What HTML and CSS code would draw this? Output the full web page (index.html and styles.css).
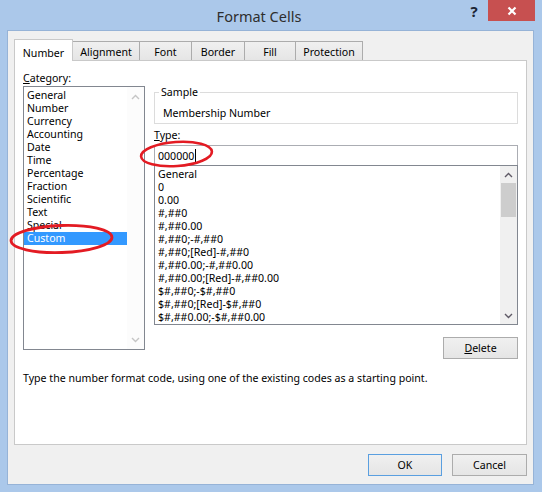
FILE: index.html
```html
<!DOCTYPE html>
<html>
<head>
<meta charset="utf-8">
<link rel="stylesheet" href="styles.css">
</head>
<body>
<div class="window">
  <div class="titlebar">
    <div class="title">Format Cells</div>
    <div class="help">?</div>
    <div class="close"><svg width="10" height="10" viewBox="0 0 10 10"><path d="M1.5 1.5 L8.5 8.5 M8.5 1.5 L1.5 8.5" stroke="#fff" stroke-width="2.2" fill="none"/></svg></div>
  </div>
  <div class="client">
    <div class="tabs">
      <div class="tab active t-number">Number</div>
      <div class="tab t-align">Alignment</div>
      <div class="tab t-font">Font</div>
      <div class="tab t-border">Border</div>
      <div class="tab t-fill">Fill</div>
      <div class="tab t-prot">Protection</div>
    </div>
    <div class="panel">
      <div class="columns">
        <div class="left">
          <div class="label"><u>C</u>ategory:</div>
          <div class="listbox cat">
            <div class="items">
              <div class="item">General</div>
              <div class="item">Number</div>
              <div class="item">Currency</div>
              <div class="item">Accounting</div>
              <div class="item">Date</div>
              <div class="item">Time</div>
              <div class="item">Percentage</div>
              <div class="item">Fraction</div>
              <div class="item">Scientific</div>
              <div class="item">Text</div>
              <div class="item">Special</div>
              <div class="item sel">Custom</div>
            </div>
            <div class="vscroll light">
              <div class="arrow up"><svg width="9" height="6" viewBox="0 0 9 6"><path d="M1 5 L4.5 1.5 L8 5" stroke="currentColor" stroke-width="1.4" fill="none"/></svg></div>
              <div class="arrow down"><svg width="9" height="6" viewBox="0 0 9 6"><path d="M1 1 L4.5 4.5 L8 1" stroke="currentColor" stroke-width="1.4" fill="none"/></svg></div>
            </div>
          </div>
        </div>
        <div class="right">
          <fieldset class="sample">
            <legend>Sample</legend>
            <div class="sample-text">Membership Number</div>
          </fieldset>
          <div class="label type-label"><u>T</u>ype:</div>
          <div class="type-input">000000<span class="caret"></span></div>
          <div class="listbox fmt">
            <div class="items">
              <div class="item">General</div>
              <div class="item">0</div>
              <div class="item">0.00</div>
              <div class="item">#,##0</div>
              <div class="item">#,##0.00</div>
              <div class="item">#,##0;-#,##0</div>
              <div class="item">#,##0;[Red]-#,##0</div>
              <div class="item">#,##0.00;-#,##0.00</div>
              <div class="item">#,##0.00;[Red]-#,##0.00</div>
              <div class="item">$#,##0;-$#,##0</div>
              <div class="item">$#,##0;[Red]-$#,##0</div>
              <div class="item">$#,##0.00;-$#,##0.00</div>
            </div>
            <div class="vscroll dark">
              <div class="arrow up"><svg width="9" height="6" viewBox="0 0 9 6"><path d="M1 5 L4.5 1.5 L8 5" stroke="currentColor" stroke-width="1.4" fill="none"/></svg></div>
              <div class="thumb"></div>
              <div class="track"></div>
              <div class="arrow down"><svg width="9" height="6" viewBox="0 0 9 6"><path d="M1 1 L4.5 4.5 L8 1" stroke="currentColor" stroke-width="1.4" fill="none"/></svg></div>
            </div>
          </div>
          <div class="btn-row"><button class="btn"><u>D</u>elete</button></div>
        </div>
      </div>
      <p class="desc">Type the number format code, using one of the existing codes as a starting point.</p>
    </div>
    <div class="footer">
      <button class="btn ok">OK</button>
      <button class="btn">Cancel</button>
    </div>
  </div>
  <svg class="annot" width="542" height="492" viewBox="0 0 542 492">
    <ellipse cx="176.5" cy="154" rx="35.5" ry="12" transform="rotate(-4 176.5 154)" fill="none" stroke="#e31b23" stroke-width="2.6"/>
    <ellipse cx="61.5" cy="239" rx="50.5" ry="13.5" transform="rotate(-2 61.5 239)" fill="none" stroke="#e31b23" stroke-width="2.8"/>
  </svg>
</div>
</body>
</html>
```

FILE: styles.css
```css
* { box-sizing: border-box; }
html, body { margin: 0; padding: 0; }
body {
  width: 542px;
  height: 492px;
  overflow: hidden;
  background: #abc8ea;
  font-family: "Noto Sans", "Open Sans", sans-serif;
  font-size: 10.6px;
  color: #000;
}
.window {
  position: relative;
  width: 542px;
  height: 492px;
  background: #abc8ea;
  display: flex;
  flex-direction: column;
}
.titlebar {
  height: 30px;
  display: flex;
  align-items: flex-start;
}
.title {
  flex: 1;
  padding-left: 52px;
  text-align: center;
  font-size: 14.5px;
  line-height: 32px;
  color: #2e2e2e;
}
.help {
  width: 16px;
  margin-right: 6px;
  margin-top: 2px;
  text-align: center;
  font-size: 15px;
  font-weight: bold;
  line-height: 18px;
  color: #1b2535;
}
.close {
  width: 47px;
  height: 21px;
  margin-right: 7px;
  background: #c75050;
  display: flex;
  align-items: center;
  justify-content: center;
}
.client {
  flex: 1;
  margin: 0 8px 7px 7px;
  border: 1px solid #96b3d7;
  background: #f0f0f0;
  padding: 8px 6px 0 6px;
  display: flex;
  flex-direction: column;
}
.tabs {
  display: flex;
  align-items: flex-end;
  height: 21px;
}
.tab {
  height: 19px;
  border: 1px solid #acacac;
  border-bottom: none;
  background: linear-gradient(#f0f0f0, #e5e5e5);
  text-align: center;
  line-height: 19px;
  padding-top: 1px;
  margin-left: -1px;
  white-space: nowrap;
}
.tab.active {
  height: 22px;
  margin-bottom: -1px;
  margin-left: 0;
  background: #fff;
  border-color: #c9c9c9;
  position: relative;
  z-index: 1;
  line-height: 22px;
  padding-top: 2px;
}
.t-number { width: 59px; }
.t-align { width: 68px; }
.t-font { width: 53px; }
.t-border { width: 54px; }
.t-fill { width: 52px; }
.t-prot { width: 68px; }
.panel {
  height: 385px;
  background: #fff;
  border: 1px solid #c9c9c9;
  padding: 10px 7px 0 8px;
}
.columns {
  display: flex;
  gap: 9px;
}
.left { width: 122px; }
.right { width: 364px; }
.label {
  height: 14px;
  line-height: 14px;
  margin-bottom: 1px;
}
.listbox {
  border: 1px solid #828790;
  background: #fff;
  display: flex;
}
.cat { height: 264px; }
.items {
  flex: 1;
  padding-top: 2px;
  min-width: 0;
}
.item {
  height: 13px;
  line-height: 13px;
  padding-left: 3px;
  white-space: nowrap;
}
.item.sel {
  background: #3399ff;
  color: #fff;
}
.vscroll {
  width: 17px;
  display: flex;
  flex-direction: column;
}
.vscroll.light { background: #fcfcfc; color: #c5c5c5; justify-content: space-between; }
.vscroll.dark { background: #f0f0f0; color: #5f5a66; }
.arrow {
  height: 17px;
  display: flex;
  align-items: center;
  justify-content: center;
}
.vscroll.light .arrow.up { padding-top: 3px; }
.vscroll.light .arrow.down { padding-bottom: 2px; }
.thumb {
  height: 34px;
  margin: 0 1px;
  background: #cdcdcd;
}
.track { flex: 1; }
.sample {
  margin: 14px 0 0 0;
  padding: 0 0 3px 4px;
  border: 1px solid #dcdcdc;
  min-width: 0;
}
.sample legend {
  padding: 0 2px;
  line-height: 14px;
}
.sample-text {
  padding: 7px 0 0 4px;
  line-height: 14px;
}
.type-label { margin-top: 4px; margin-bottom: 0; }
.type-input {
  margin-top: 3px;
  height: 21px;
  border: 1px solid #abadb3;
  padding-left: 3px;
  display: flex;
  align-items: center;
  background: #fff;
  line-height: 14px;
}
.caret {
  display: inline-block;
  width: 1px;
  height: 13px;
  background: #000;
  margin-left: 1px;
}
.fmt {
  margin-top: -1px;
  height: 160px;
}
.btn-row {
  display: flex;
  justify-content: flex-end;
  margin-top: 12px;
}
.btn {
  width: 75px;
  height: 22px;
  border: 1px solid #acacac;
  background: linear-gradient(#f0f0f0, #e5e5e5);
  font-family: inherit;
  font-size: 10.6px;
  color: #000;
  padding: 0;
  line-height: 20px;
}
.desc {
  margin: 12px 0 0 0;
  line-height: 14px;
}
.footer {
  display: flex;
  justify-content: flex-end;
  gap: 10px;
  margin-top: 9px;
}
.btn.ok {
  width: 74px;
  border-color: #5a9fe0;
}
.annot {
  position: absolute;
  left: 0;
  top: 0;
  pointer-events: none;
}
```
